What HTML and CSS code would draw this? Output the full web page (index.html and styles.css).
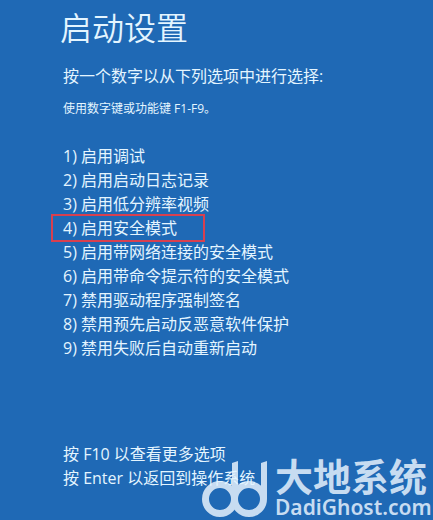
FILE: index.html
```html
<!DOCTYPE html>
<html lang="zh-CN">

<head>
    <meta charset="UTF-8">
    <meta name="viewport" content="width=device-width, initial-scale=1.0">
    <title>启动设置</title>
    <link rel="stylesheet" href="styles.css">
</head>

<body>

    <main class="startup">
        <h1>启动设置</h1>
        <p class="lead">按一个数字以从下列选项中进行选择:</p>
        <p class="hint">使用数字键或功能键 F1-F9。</p>

        <ul class="options">
            <li>1) 启用调试</li>
            <li>2) 启用启动日志记录</li>
            <li>3) 启用低分辨率视频</li>
            <li class="selected">4) 启用安全模式</li>
            <li>5) 启用带网络连接的安全模式</li>
            <li>6) 启用带命令提示符的安全模式</li>
            <li>7) 禁用驱动程序强制签名</li>
            <li>8) 禁用预先启动反恶意软件保护</li>
            <li>9) 禁用失败后自动重新启动</li>
        </ul>

        <div class="more">
            <p>按 F10 以查看更多选项</p>
            <p>按 Enter 以返回到操作系统</p>
        </div>
    </main>

    <div class="watermark">
        <svg class="watermark-logo" width="66" height="58" viewBox="0 0 66 58" fill="none" stroke="currentColor">
            <circle cx="18" cy="39" r="14.5" stroke-width="7" />
            <circle cx="47" cy="39" r="14.5" stroke-width="7" />
            <path fill="currentColor" stroke="none" d="M30 3 L36 1 V39 H30 Z M59 3 L65 1 V39 H59 Z" />
        </svg>
        <div class="watermark-text">
            <span class="watermark-name">大地系统</span>
            <span class="watermark-site">DadiGhost.com</span>
        </div>
    </div>

</body>

</html>
```
FILE: styles.css
```css
body {
    margin: 0;
    min-height: 100vh;
    position: relative;
    overflow-x: hidden;
    background-color: #1f69b5;
    color: #e4f5ff;
    font-family: "Open Sans", "Noto Sans CJK SC", sans-serif;
    font-size: 16px;
    line-height: 24px;
}

h1,
p,
ul {
    margin: 0;
    padding: 0;
    font-weight: 400;
}

.startup {
    position: relative;
    z-index: 1;
    padding: 6px 16px 0 63px;
}

h1 {
    margin-left: -3px;
    font-size: 32px;
    line-height: 44px;
    font-weight: 350;
}

.lead {
    margin-top: 14px;
}

.hint {
    margin-top: 11px;
    font-size: 12px;
    line-height: 20px;
}

.options {
    margin-top: 25px;
    list-style: none;
}

/* рамка вокруг выбранного пункта */
.selected {
    width: 140px;
    margin: -2px 0 -2px -12px;
    padding-left: 10px;
    border: 2px solid #d8404f;
}

.more {
    margin-top: 82px;
}

.watermark {
    position: absolute;
    right: 0;
    bottom: 0;
    display: flex;
    align-items: flex-end;
    gap: 7px;
    color: #c7dcf1;
}

.watermark-logo {
    margin-bottom: 2px;
}

.watermark-text {
    display: flex;
    flex-direction: column;
    width: 158px;
    white-space: nowrap;
}

.watermark-name {
    font-family: "Noto Sans CJK SC", sans-serif;
    font-size: 38px;
    line-height: 38px;
    font-weight: 700;
}

.watermark-site {
    font-family: "Noto Sans", sans-serif;
    font-size: 21px;
    line-height: 26px;
    font-weight: 600;
}
```
